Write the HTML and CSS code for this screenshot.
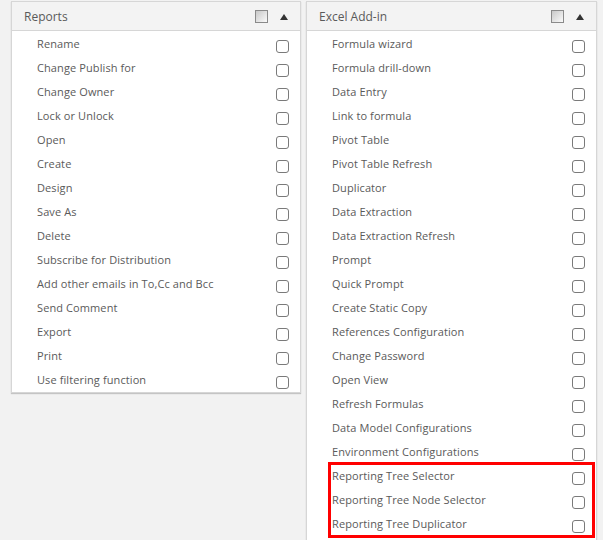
FILE: index.html
```html
<!DOCTYPE html>
<html lang="en">
<head>
    <meta charset="UTF-8">
    <link rel="stylesheet" href="styles.css">
    <title>Rights</title>
</head>
<body>
    <div class="board">
        <div class="panel">
            <div class="panel-head">
                <span class="title">Reports</span>
                <span class="all-box"></span>
                <span class="arrow"></span>
            </div>
            <div class="list">
                <div class="row"><span>Rename</span><input type="checkbox" class="check"></div>
                <div class="row"><span>Change Publish for</span><input type="checkbox" class="check"></div>
                <div class="row"><span>Change Owner</span><input type="checkbox" class="check"></div>
                <div class="row"><span>Lock or Unlock</span><input type="checkbox" class="check"></div>
                <div class="row"><span>Open</span><input type="checkbox" class="check"></div>
                <div class="row"><span>Create</span><input type="checkbox" class="check"></div>
                <div class="row"><span>Design</span><input type="checkbox" class="check"></div>
                <div class="row"><span>Save As</span><input type="checkbox" class="check"></div>
                <div class="row"><span>Delete</span><input type="checkbox" class="check"></div>
                <div class="row"><span>Subscribe for Distribution</span><input type="checkbox" class="check"></div>
                <div class="row"><span>Add other emails in To,Cc and Bcc</span><input type="checkbox" class="check"></div>
                <div class="row"><span>Send Comment</span><input type="checkbox" class="check"></div>
                <div class="row"><span>Export</span><input type="checkbox" class="check"></div>
                <div class="row"><span>Print</span><input type="checkbox" class="check"></div>
                <div class="row"><span>Use filtering function</span><input type="checkbox" class="check"></div>
            </div>
        </div>
        <div class="panel panel-tall">
            <div class="panel-head">
                <span class="title">Excel Add-in</span>
                <span class="all-box"></span>
                <span class="arrow"></span>
            </div>
            <div class="list">
                <div class="row"><span>Formula wizard</span><input type="checkbox" class="check"></div>
                <div class="row"><span>Formula drill-down</span><input type="checkbox" class="check"></div>
                <div class="row"><span>Data Entry</span><input type="checkbox" class="check"></div>
                <div class="row"><span>Link to formula</span><input type="checkbox" class="check"></div>
                <div class="row"><span>Pivot Table</span><input type="checkbox" class="check"></div>
                <div class="row"><span>Pivot Table Refresh</span><input type="checkbox" class="check"></div>
                <div class="row"><span>Duplicator</span><input type="checkbox" class="check"></div>
                <div class="row"><span>Data Extraction</span><input type="checkbox" class="check"></div>
                <div class="row"><span>Data Extraction Refresh</span><input type="checkbox" class="check"></div>
                <div class="row"><span>Prompt</span><input type="checkbox" class="check"></div>
                <div class="row"><span>Quick Prompt</span><input type="checkbox" class="check"></div>
                <div class="row"><span>Create Static Copy</span><input type="checkbox" class="check"></div>
                <div class="row"><span>References Configuration</span><input type="checkbox" class="check"></div>
                <div class="row"><span>Change Password</span><input type="checkbox" class="check"></div>
                <div class="row"><span>Open View</span><input type="checkbox" class="check"></div>
                <div class="row"><span>Refresh Formulas</span><input type="checkbox" class="check"></div>
                <div class="row"><span>Data Model Configurations</span><input type="checkbox" class="check"></div>
                <div class="row"><span>Environment Configurations</span><input type="checkbox" class="check"></div>
                <div class="marked">
                    <div class="row"><span>Reporting Tree Selector</span><input type="checkbox" class="check"></div>
                    <div class="row"><span>Reporting Tree Node Selector</span><input type="checkbox" class="check"></div>
                    <div class="row"><span>Reporting Tree Duplicator</span><input type="checkbox" class="check"></div>
                </div>
            </div>
        </div>
    </div>
</body>
</html>
```
FILE: styles.css
```css
html, body {
  margin: 0;
  background: #f2f2f2;
  overflow: hidden;
}
body {
  font-family: "Open Sans", "Liberation Sans", sans-serif;
  font-size: 11px;
  color: #5a5a5a;
}
.board {
  display: flex;
  align-items: flex-start;
  gap: 5px;
  padding: 1px 0 0 11px;
}
.panel {
  width: 288px;
  background: #fff;
  border: solid 1px #d6d6d6;
  box-shadow: 0 1px 1px #c4c4c4;
}
.panel-tall {
  width: 289px;
  height: 620px;
}
.panel-head {
  display: flex;
  align-items: center;
  height: 28px;
  padding: 0 11px 0 12px;
  background: #f3f3f3;
  border-bottom: solid 1px #d6d6d6;
}
.title {
  flex: 1;
  font-size: 12px;
}
.all-box {
  width: 11px;
  height: 11px;
  border: solid 1px #8a8a8a;
  background: linear-gradient(135deg, #c8c8c8, #fafafa);
  margin-right: 12px;
}
.arrow {
  width: 0;
  height: 0;
  border-left: 4px solid transparent;
  border-right: 4px solid transparent;
  border-bottom: 6px solid #333;
  margin-top: 1px;
  margin-right: 1px;
}
.list {
  padding-top: 1px;
}
.row {
  display: flex;
  align-items: center;
  height: 24px;
  padding: 0 11px 0 25px;
}
.row span {
  flex: 1;
  padding-bottom: 2px;
  letter-spacing: 0.1px;
}
.check {
  appearance: none;
  width: 13px;
  height: 13px;
  margin: 4px 0 0 0;
  border: solid 1px #7a7a7a;
  border-radius: 3px;
  background: #fff;
}
.panel-tall .row {
  padding: 0 11px 0 25px;
}
.marked {
  margin: 0 3px 0 23px;
  outline: solid 3px #ff0000;
  outline-offset: -1px;
}
.panel-tall .marked .row {
  padding: 0 8px 0 2px;
}
```
